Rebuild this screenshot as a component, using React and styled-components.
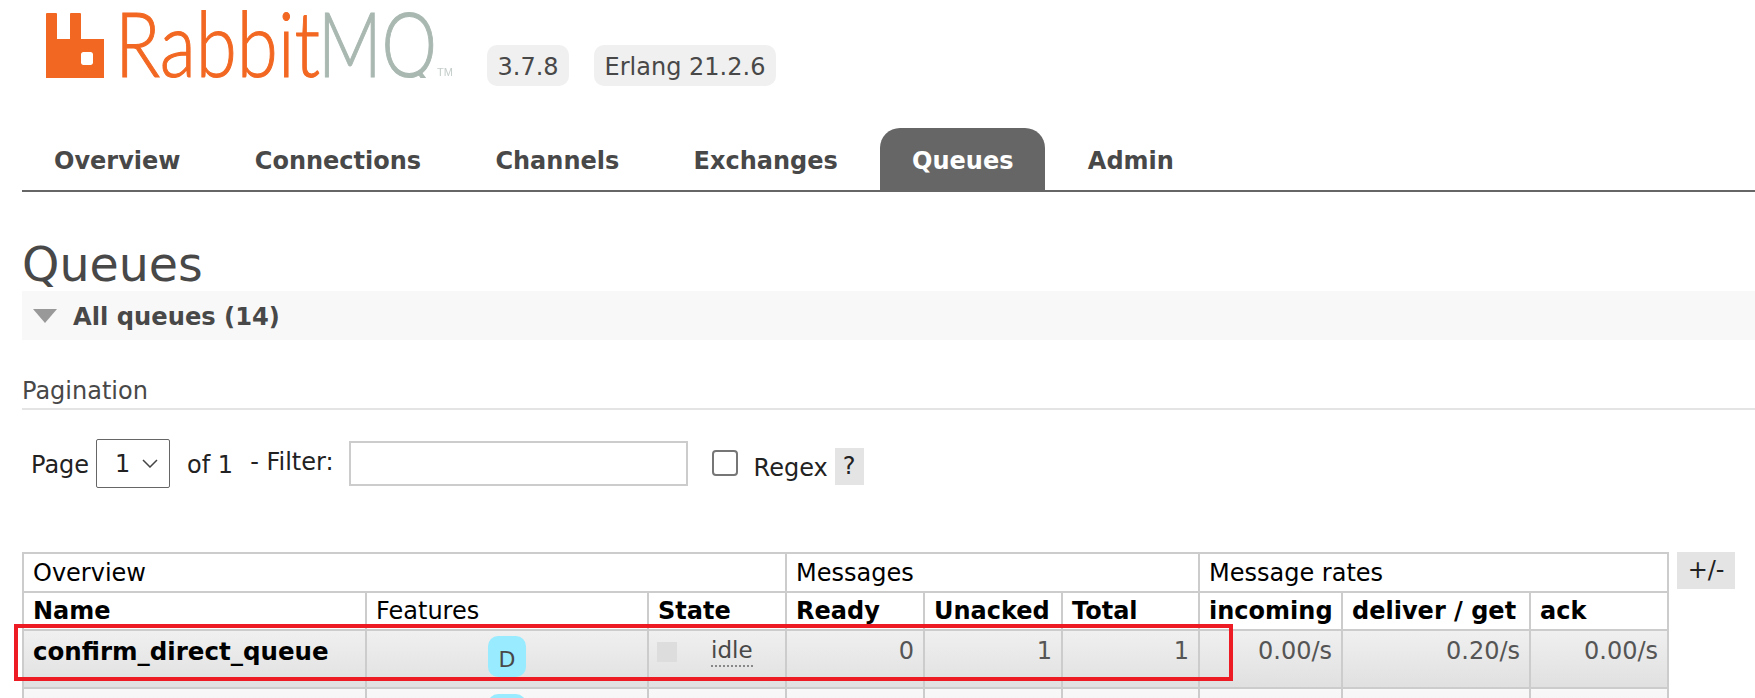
import React from "react";
import styled, { createGlobalStyle } from "styled-components";

const TABS = ["Overview", "Connections", "Channels", "Exchanges", "Queues", "Admin"];

const RATE_COLUMNS = [
  { label: "Ready", width: 138 },
  { label: "Unacked", width: 138 },
  { label: "Total", width: 137 },
  { label: "incoming", width: 143 },
  { label: "deliver / get", width: 188 },
  { label: "ack", width: 138 }
];

const GlobalStyle = createGlobalStyle`
  html, body {
    margin: 0;
    background: #fff;
    overflow: hidden;
  }
  body {
    font-family: "DejaVu Sans", Verdana, sans-serif;
    color: #484848;
  }
`;

const Logo = () => (
  <LogoSvg width="420" height="78" viewBox="0 0 420 78">
    <path
      fill="#f26822"
      fillRule="evenodd"
      d="M0 14a1 1 0 0 1 1-1h9a1 1 0 0 1 1 1v25h13V14a1 1 0 0 1 1-1h9a1 1 0 0 1 1 1v25h23v39H0z M37 52a2.500 2.500 0 0 0-2 2v9a2.500 2.500 0 0 0 2 2h8a2.500 2.500 0 0 0 2-2v-9a2.500 2.500 0 0 0-2-2z"
    />
    <LogoWord x="69" y="77" $color="#f26822" textLength="205" lengthAdjust="spacingAndGlyphs">
      Rabbit
    </LogoWord>
    <LogoWord x="272" y="77" $color="#a9b8b1" textLength="119" lengthAdjust="spacingAndGlyphs">
      MQ
    </LogoWord>
    <LogoMark x="391" y="76" fill="#c4cdc9">
      TM
    </LogoMark>
  </LogoSvg>
);

const QueueCells = ({ name, counts, rates }) => (
  <>
    <NameCell>{name}</NameCell>
    <BadgeCell>
      <FeatureBadge>D</FeatureBadge>
    </BadgeCell>
    <StateCell>
      <StateInner>
        <StateDot />
        <StateLabel>idle</StateLabel>
      </StateInner>
    </StateCell>
    {[...counts, ...rates].map((value, i) => (
      <NumberCell key={i}>{value}</NumberCell>
    ))}
  </>
);

const App = () => (
  <Page>
    <GlobalStyle />
    <Header>
      <Logo />
      <Badges>
        <Badge>3.7.8</Badge>
        <Badge>Erlang 21.2.6</Badge>
      </Badges>
    </Header>
    <Tabs>
      {TABS.map(tab => (
        <Tab key={tab} $active={tab === "Queues"}>
          {tab}
        </Tab>
      ))}
    </Tabs>
    <Title>Queues</Title>
    <SectionBar>
      <Arrow />
      <SectionTitle>All queues (14)</SectionTitle>
    </SectionBar>
    <SubTitle>Pagination</SubTitle>
    <Controls>
      <ControlText>Page</ControlText>
      <SelectBox>
        <span>1</span>
        <svg width="16" height="9" viewBox="0 0 16 9" fill="none" stroke="#444" strokeWidth="1.500">
          <path d="M1 1l7 7 7-7" />
        </svg>
      </SelectBox>
      <OfText>of 1</OfText>
      <FilterText>- Filter:</FilterText>
      <FilterInput />
      <CheckBox />
      <RegexText>Regex</RegexText>
      <Help>?</Help>
    </Controls>
    <TableWrap>
      <QueueTable>
        <colgroup>
          <col style={{ width: 343 }} />
          <col style={{ width: 282 }} />
          <col style={{ width: 138 }} />
          {RATE_COLUMNS.map(col => (
            <col key={col.label} style={{ width: col.width }} />
          ))}
        </colgroup>
        <thead>
          <tr>
            <GroupCell colSpan={3}>Overview</GroupCell>
            <GroupCell colSpan={3}>Messages</GroupCell>
            <GroupCell colSpan={3}>Message rates</GroupCell>
          </tr>
          <tr>
            <HeadCell>Name</HeadCell>
            <HeadCell $plain>Features</HeadCell>
            <HeadCell>State</HeadCell>
            {RATE_COLUMNS.map(col => (
              <HeadCell key={col.label}>{col.label}</HeadCell>
            ))}
          </tr>
        </thead>
        <tbody>
          <QueueRow>
            <QueueCells
              name="confirm_direct_queue"
              counts={[0, 1, 1]}
              rates={["0.00/s", "0.20/s", "0.00/s"]}
            />
          </QueueRow>
          <QueueRow $alt>
            <QueueCells
              name="confirm_fanout_queue"
              counts={[0, 0, 0]}
              rates={["0.00/s", "0.00/s", "0.00/s"]}
            />
          </QueueRow>
        </tbody>
      </QueueTable>
      <ColumnToggle>+/-</ColumnToggle>
      <Highlight />
    </TableWrap>
  </Page>
);

const Page = styled.div`
  height: 698px;
  overflow: hidden;
  padding-left: 22px;
`;

const Header = styled.div`
  display: flex;
  align-items: flex-start;
  height: 128px;
  padding-left: 24px;
`;

const LogoSvg = styled.svg`
  display: block;
  flex: none;
  filter: blur(0.5px);
`;

const LogoWord = styled.text`
  font-family: "Lato", "Open Sans", sans-serif;
  font-weight: 300;
  font-size: 91px;
  fill: ${({ $color }) => $color};
  stroke: ${({ $color }) => $color};
  stroke-width: 1.1px;
`;

const LogoMark = styled.text`
  font-family: "Liberation Sans", sans-serif;
  font-size: 11px;
`;

const Badges = styled.div`
  display: flex;
  gap: 25px;
  margin: 45px 0 0 21px;
`;

const Badge = styled.span`
  height: 41px;
  padding: 0 10.5px;
  border-radius: 10px;
  background: #f0f0f0;
  font-size: 24px;
  line-height: 44px;
`;

const Tabs = styled.div`
  display: flex;
  gap: 11.3px;
  height: 62px;
  border-bottom: 2px solid #666;
`;

const Tab = styled.div`
  box-sizing: border-box;
  padding: 4px 31px 0 32px;
  border-radius: 20px 20px 0 0;
  font-size: 24px;
  font-weight: bold;
  line-height: 58px;
  background: ${({ $active }) => ($active ? "#666" : "transparent")};
  color: ${({ $active }) => ($active ? "#fff" : "#484848")};
`;

const Title = styled.h1`
  display: flex;
  align-items: flex-end;
  box-sizing: border-box;
  height: 99px;
  margin: 0;
  padding-bottom: 3px;
  font-size: 47.5px;
  font-weight: normal;
  line-height: 1;
  color: #484848;
`;

const SectionBar = styled.div`
  display: flex;
  align-items: center;
  height: 49px;
  padding-left: 11px;
  background: #f8f8f8;
`;

const Arrow = styled.span`
  width: 0;
  height: 0;
  margin-right: 16px;
  border-left: 12px solid transparent;
  border-right: 12px solid transparent;
  border-top: 14px solid #999;
`;

const SectionTitle = styled.span`
  padding-top: 2px;
  font-size: 24.2px;
  font-weight: bold;
`;

const SubTitle = styled.h3`
  margin: 38px 0 0;
  height: 30px;
  border-bottom: 2px solid #e4e4e4;
  font-size: 24px;
  font-weight: normal;
  line-height: 26px;
  color: #484848;
`;

const Controls = styled.div`
  display: flex;
  align-items: flex-start;
  height: 113px;
  padding: 29px 0 0 9px;
  font-size: 24px;
  color: #222;
`;

const ControlText = styled.span`
  margin-top: 12px;
`;

const SelectBox = styled.div`
  display: flex;
  align-items: center;
  justify-content: space-between;
  box-sizing: border-box;
  width: 74px;
  height: 49px;
  margin-left: 7px;
  padding: 0 11px 0 18px;
  border: 1px solid #666;
  border-radius: 2px;
`;

const OfText = styled(ControlText)`
  margin-left: 17px;
`;

const FilterText = styled.span`
  margin: 9px 0 0 17px;
`;

const FilterInput = styled.div`
  box-sizing: border-box;
  width: 339px;
  height: 45px;
  margin: 2px 0 0 15px;
  border: 2px solid #ccc;
`;

const CheckBox = styled.div`
  box-sizing: border-box;
  width: 26px;
  height: 26px;
  margin: 11px 0 0 24px;
  border: 2px solid #767676;
  border-radius: 4px;
`;

const RegexText = styled.span`
  margin: 15px 0 0 16px;
`;

const Help = styled.span`
  width: 29px;
  height: 37px;
  margin: 9px 0 0 7px;
  background: #e4e4e4;
  line-height: 37px;
  text-align: center;
`;

const TableWrap = styled.div`
  position: relative;
  display: flex;
  align-items: flex-start;
  gap: 8px;
`;

const QueueTable = styled.table`
  table-layout: fixed;
  width: 1645px;
  border-collapse: collapse;
  font-size: 24px;
  color: #000;
`;

const cellBorder = "2px solid #ccc";

const GroupCell = styled.th`
  height: 37px;
  padding: 0 9px;
  border: ${cellBorder};
  font-weight: normal;
  text-align: left;
  white-space: nowrap;
`;

const HeadCell = styled.th`
  height: 36px;
  padding: 0 9px;
  border: ${cellBorder};
  font-weight: ${({ $plain }) => ($plain ? "normal" : "bold")};
  text-align: left;
  white-space: nowrap;
  overflow: visible;
`;

const QueueRow = styled.tr`
  background: ${({ $alt }) =>
    $alt
      ? "linear-gradient(#f8f8f8, #f0f0f0)"
      : "linear-gradient(#f0f0f0, #e0e0e0)"};
`;

const BodyCell = styled.td`
  box-sizing: border-box;
  height: 58px;
  padding: 0 9px;
  border: ${cellBorder};
  vertical-align: top;
  white-space: nowrap;
`;

const NameCell = styled(BodyCell)`
  padding-top: 6px;
  font-size: 24.5px;
  font-weight: bold;
  color: #000;
`;

const BadgeCell = styled(BodyCell)`
  padding-top: 5px;
`;

const FeatureBadge = styled.span`
  display: block;
  width: 38px;
  height: 41px;
  margin: 0 auto;
  border-radius: 10px;
  background: #99ebff;
  font-size: 22px;
  color: #484848;
  line-height: 48px;
  text-align: center;
`;

const StateCell = styled(BodyCell)`
  padding: 11px 8px 0;
`;

const StateInner = styled.div`
  display: flex;
  align-items: flex-start;
`;

const StateDot = styled.span`
  width: 20px;
  height: 20px;
  margin-right: 34px;
  background: #ddd;
`;

const StateLabel = styled.span`
  margin-top: -6px;
  font-size: 23px;
  color: #484848;
  border-bottom: 2px dotted #888;
  line-height: 29px;
`;

const NumberCell = styled(BodyCell)`
  padding-top: 6px;
  color: #555;
  text-align: right;
`;

const ColumnToggle = styled.div`
  width: 58px;
  height: 37px;
  background: #e4e4e4;
  font-size: 24px;
  line-height: 37px;
  text-align: center;
  color: #222;
`;

const Highlight = styled.div`
  position: absolute;
  top: 72px;
  left: -8px;
  width: 1219px;
  height: 57px;
  box-sizing: border-box;
  border: 4px solid #ed1c24;
  pointer-events: none;
`;

export default App;
